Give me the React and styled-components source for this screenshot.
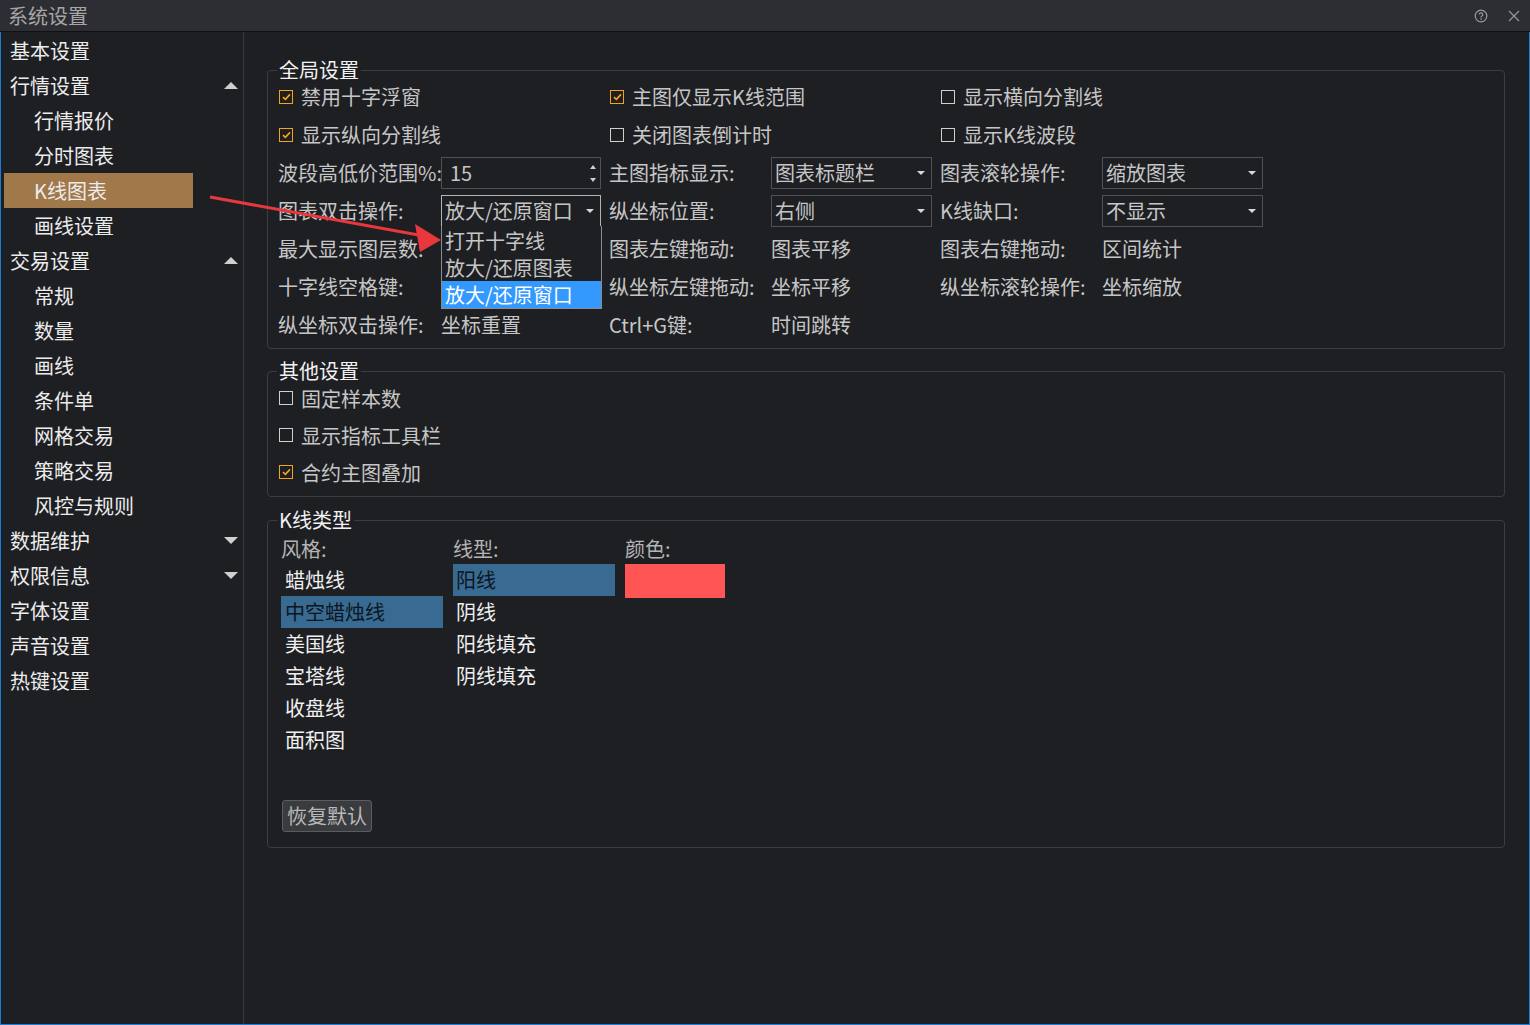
import React from "react";
import styled, { createGlobalStyle } from "styled-components";

const Global = createGlobalStyle`
  html, body { margin: 0; padding: 0; background: #1e1f23; }
  body { font-family: "Noto Sans CJK SC", "Noto Sans", sans-serif; }
  * { box-sizing: border-box; }
`;

const Window = styled.div`
  position: relative;
  width: 1530px;
  height: 1025px;
  display: flex;
  flex-direction: column;
  background: #1e1f23;
  font-family: "Noto Sans CJK SC", "Noto Sans", sans-serif;
  font-size: 20px;
  overflow: hidden;
`;

const TitleBar = styled.div`
  height: 32px;
  flex: none;
  display: flex;
  align-items: center;
  padding-left: 8px;
  background: #2d2e33;
  border-bottom: 1px solid #101012;
  color: #a6a6a6;
  font-size: 20px;
`;

const TitleText = styled.div`
  flex: 1;
  line-height: 30px;
`;

const TitleBtn = styled.div`
  width: 33px;
  height: 30px;
  display: flex;
  align-items: center;
  justify-content: center;
`;

const Main = styled.div`
  flex: 1;
  display: grid;
  grid-template-columns: 243px 1fr;
  border: 1px solid #1a7ed6;
  border-top: none;
  min-height: 0;
`;

const Sidebar = styled.div`
  border-right: 1px solid #38393d;
  padding-top: 1px;
  display: flex;
  flex-direction: column;
`;

const SideItem = styled.div`
  height: 35px;
  line-height: 35px;
  margin-left: 3px;
  display: flex;
  align-items: center;
  justify-content: space-between;
  color: #ececec;
  white-space: nowrap;
  padding-left: ${(p) => (p.$sub ? "30px" : "6px")};
  padding-right: 5px;
  width: ${(p) => (p.$sub ? "189px" : "auto")};
  background: ${(p) => (p.$active ? "#a0784a" : "transparent")};
`;

const Tri = styled.span`
  width: 0;
  height: 0;
  border-left: 7px solid transparent;
  border-right: 7px solid transparent;
  ${(p) =>
    p.$up
      ? "border-bottom: 7px solid #cfcfcf;"
      : "border-top: 7px solid #cfcfcf;"}
`;

const Content = styled.div`
  padding: 26px 24px 0 23px;
  display: flex;
  flex-direction: column;
`;

const Group = styled.fieldset`
  margin: ${(p) => p.$mt || 0}px 0 0 0;
  padding: 0 0 ${(p) => p.$pb || 0}px 0;
  border: 1px solid #3c3d41;
  border-radius: 4px;
  min-width: 0;
`;

const Legend = styled.legend`
  margin-left: 9px;
  padding: 0 2px;
  line-height: 24px;
  font-size: 20px;
  color: #f2f2f2;
`;

const GlobalGrid = styled.div`
  display: grid;
  grid-template-columns: 163px 168px 162px 169px 162px 162px;
  grid-template-rows: repeat(7, 32px);
  row-gap: 6px;
  margin: -1px 0 0 10px;
  align-items: center;
`;

const Cell = styled.div`
  position: relative;
  grid-column: span ${(p) => p.$span || 1};
  color: #c6c6c6;
  white-space: nowrap;
  line-height: 28px;
`;

const CheckRow = styled.label`
  display: flex;
  align-items: center;
  gap: 8px;
  color: #c6c6c6;
  white-space: nowrap;
  height: ${(p) => p.$h || 32}px;
  margin-left: 1px;
`;

const Box = styled.span`
  width: 14px;
  height: 14px;
  flex: none;
  border: 1px solid ${(p) => (p.$on ? "#f5a31a" : "#cfcfcf")};
  display: flex;
  align-items: center;
  justify-content: center;
`;

const Check = ({ on, label, h }) => (
  <CheckRow $h={h}>
    <Box $on={on}>
      {on && (
        <svg width="9" height="8" viewBox="0 0 9 8">
          <path d="M1 4.2 L3.4 6.4 L8 1.4" fill="none" stroke="#f5a31a" strokeWidth="1.6" />
        </svg>
      )}
    </Box>
    {label}
  </CheckRow>
);

const Field = styled.div`
  position: relative;
  width: ${(p) => p.$w || 160}px;
  height: 32px;
  border: 1px solid ${(p) => (p.$focus ? "#b4b4b4" : "#505155")};
  display: flex;
  align-items: center;
  justify-content: space-between;
  padding: 0 6px 0 ${(p) => p.$pl || 3}px;
  color: #c6c6c6;
  white-space: nowrap;
`;

const Caret = styled.span`
  width: 0;
  height: 0;
  border-left: 4px solid transparent;
  border-right: 4px solid transparent;
  border-top: 4px solid #d8d8d8;
`;

const Spin = styled.div`
  display: flex;
  flex-direction: column;
  gap: 9px;
  margin-right: -2px;
`;

const SpinTri = styled.span`
  width: 0;
  height: 0;
  border-left: 3px solid transparent;
  border-right: 3px solid transparent;
  ${(p) => (p.$up ? "border-bottom: 4px solid #cfcfcf;" : "border-top: 4px solid #cfcfcf;")}
`;

const Popup = styled.div`
  position: absolute;
  top: 100%;
  left: -1px;
  width: 161px;
  padding-top: 1px;
  background: #1e1f23;
  border: 1px solid #8c8c8c;
  border-top: none;
  z-index: 2;
`;

const PopItem = styled.div`
  height: 27px;
  line-height: 27px;
  padding-left: 3px;
  color: ${(p) => (p.$sel ? "#ffffff" : "#c6c6c6")};
  background: ${(p) => (p.$sel ? "#3399ff" : "transparent")};
`;

const Select = ({ value, focus, open, w }) => (
  <Field $focus={focus} $w={w}>
    {value}
    <Caret />
    {open && (
      <Popup>
        <PopItem>打开十字线</PopItem>
        <PopItem>放大/还原图表</PopItem>
        <PopItem $sel>放大/还原窗口</PopItem>
      </Popup>
    )}
  </Field>
);

const OtherList = styled.div`
  display: flex;
  flex-direction: column;
  gap: 7px;
  margin-left: 10px;
`;

const KBody = styled.div`
  margin-left: 13px;
  display: flex;
  flex-direction: column;
  align-items: flex-start;
`;

const KGrid = styled.div`
  display: grid;
  grid-template-columns: 162px 162px 100px;
  column-gap: 10px;
  align-items: start;
  margin-top: 1px;
`;

const KCol = styled.div`
  display: flex;
  flex-direction: column;
`;

const KHead = styled.div`
  height: 31px;
  line-height: 31px;
  color: #b4b4b4;
`;

const KItem = styled.div`
  height: 32px;
  line-height: 32px;
  padding-left: ${(p) => p.$pl || 4}px;
  color: ${(p) => (p.$sel ? "#0c1520" : "#f0f0f0")};
  background: ${(p) => (p.$sel ? "#396a91" : "transparent")};
`;

const Swatch = styled.div`
  width: 100px;
  height: 34px;
  background: #ff5555;
`;

const ResetBtn = styled.button`
  margin: 44px 0 0 1px;
  width: 90px;
  height: 32px;
  padding: 0;
  background: #3a3b3e;
  border: 1px solid #5b5c60;
  border-radius: 3px;
  color: #b9b9b9;
  font-family: inherit;
  font-size: 20px;
  line-height: 28px;
`;

const ArrowLayer = styled.svg`
  position: absolute;
  left: 0;
  top: 0;
  pointer-events: none;
`;

const sideItems = [
  { t: "基本设置" },
  { t: "行情设置", tri: "up" },
  { t: "行情报价", sub: true },
  { t: "分时图表", sub: true },
  { t: "K线图表", sub: true, active: true },
  { t: "画线设置", sub: true },
  { t: "交易设置", tri: "up" },
  { t: "常规", sub: true },
  { t: "数量", sub: true },
  { t: "画线", sub: true },
  { t: "条件单", sub: true },
  { t: "网格交易", sub: true },
  { t: "策略交易", sub: true },
  { t: "风控与规则", sub: true },
  { t: "数据维护", tri: "down" },
  { t: "权限信息", tri: "down" },
  { t: "字体设置" },
  { t: "声音设置" },
  { t: "热键设置" },
];

export default function App() {
  return (
    <Window>
      <Global />
      <TitleBar>
        <TitleText>系统设置</TitleText>
        <TitleBtn>
          <svg width="14" height="14" viewBox="0 0 14 14">
            <circle cx="7" cy="7" r="5.8" fill="none" stroke="#9a9a9a" strokeWidth="1.2" />
            <path d="M5.2 5.6 A1.8 1.8 0 1 1 7.6 7.3 Q7 7.6 7 8.4" fill="none" stroke="#9a9a9a" strokeWidth="1.2" />
            <circle cx="7" cy="10.1" r="0.8" fill="#9a9a9a" />
          </svg>
        </TitleBtn>
        <TitleBtn>
          <svg width="12" height="12" viewBox="0 0 12 12">
            <path d="M1 1 L11 11 M11 1 L1 11" stroke="#9a9a9a" strokeWidth="1.1" />
          </svg>
        </TitleBtn>
      </TitleBar>
      <Main>
        <Sidebar>
          {sideItems.map((it) => (
            <SideItem key={it.t} $sub={it.sub} $active={it.active}>
              {it.t}
              {it.tri && <Tri $up={it.tri === "up"} />}
            </SideItem>
          ))}
        </Sidebar>
        <Content>
          <Group $pb={7}>
            <Legend>全局设置</Legend>
            <GlobalGrid>
              <Cell $span={2}><Check on label="禁用十字浮窗" /></Cell>
              <Cell $span={2}><Check on label="主图仅显示K线范围" /></Cell>
              <Cell $span={2}><Check label="显示横向分割线" /></Cell>

              <Cell $span={2}><Check on label="显示纵向分割线" /></Cell>
              <Cell $span={2}><Check label="关闭图表倒计时" /></Cell>
              <Cell $span={2}><Check label="显示K线波段" /></Cell>

              <Cell>波段高低价范围%:</Cell>
              <Cell>
                <Field $pl={8}>
                  15
                  <Spin>
                    <SpinTri $up />
                    <SpinTri />
                  </Spin>
                </Field>
              </Cell>
              <Cell>主图指标显示:</Cell>
              <Cell><Select value="图表标题栏" w={161} /></Cell>
              <Cell>图表滚轮操作:</Cell>
              <Cell><Select value="缩放图表" w={161} /></Cell>

              <Cell>图表双击操作:</Cell>
              <Cell><Select value="放大/还原窗口" focus open /></Cell>
              <Cell>纵坐标位置:</Cell>
              <Cell><Select value="右侧" w={161} /></Cell>
              <Cell>K线缺口:</Cell>
              <Cell><Select value="不显示" w={161} /></Cell>

              <Cell>最大显示图层数:</Cell>
              <Cell />
              <Cell>图表左键拖动:</Cell>
              <Cell>图表平移</Cell>
              <Cell>图表右键拖动:</Cell>
              <Cell>区间统计</Cell>

              <Cell>十字线空格键:</Cell>
              <Cell />
              <Cell>纵坐标左键拖动:</Cell>
              <Cell>坐标平移</Cell>
              <Cell>纵坐标滚轮操作:</Cell>
              <Cell>坐标缩放</Cell>

              <Cell>纵坐标双击操作:</Cell>
              <Cell>坐标重置</Cell>
              <Cell>Ctrl+G键:</Cell>
              <Cell>时间跳转</Cell>
              <Cell />
              <Cell />
            </GlobalGrid>
          </Group>

          <Group $mt={10} $pb={9}>
            <Legend>其他设置</Legend>
            <OtherList>
              <Check h={30} label="固定样本数" />
              <Check h={30} label="显示指标工具栏" />
              <Check h={30} on label="合约主图叠加" />
            </OtherList>
          </Group>

          <Group $mt={11} $pb={15}>
            <Legend>K线类型</Legend>
            <KBody>
              <KGrid>
                <KCol>
                  <KHead>风格:</KHead>
                  <KItem>蜡烛线</KItem>
                  <KItem $sel>中空蜡烛线</KItem>
                  <KItem>美国线</KItem>
                  <KItem>宝塔线</KItem>
                  <KItem>收盘线</KItem>
                  <KItem>面积图</KItem>
                </KCol>
                <KCol>
                  <KHead>线型:</KHead>
                  <KItem $sel $pl={3}>阳线</KItem>
                  <KItem $pl={3}>阴线</KItem>
                  <KItem $pl={3}>阳线填充</KItem>
                  <KItem $pl={3}>阴线填充</KItem>
                </KCol>
                <KCol>
                  <KHead>颜色:</KHead>
                  <Swatch />
                </KCol>
              </KGrid>
              <ResetBtn>恢复默认</ResetBtn>
            </KBody>
          </Group>
        </Content>
      </Main>
      <ArrowLayer width="1530" height="1025">
        <line x1="210" y1="197" x2="424" y2="236" stroke="#e8383d" strokeWidth="3" />
        <polygon points="441,240 415,224 420,252" fill="#e8383d" />
      </ArrowLayer>
    </Window>
  );
}
